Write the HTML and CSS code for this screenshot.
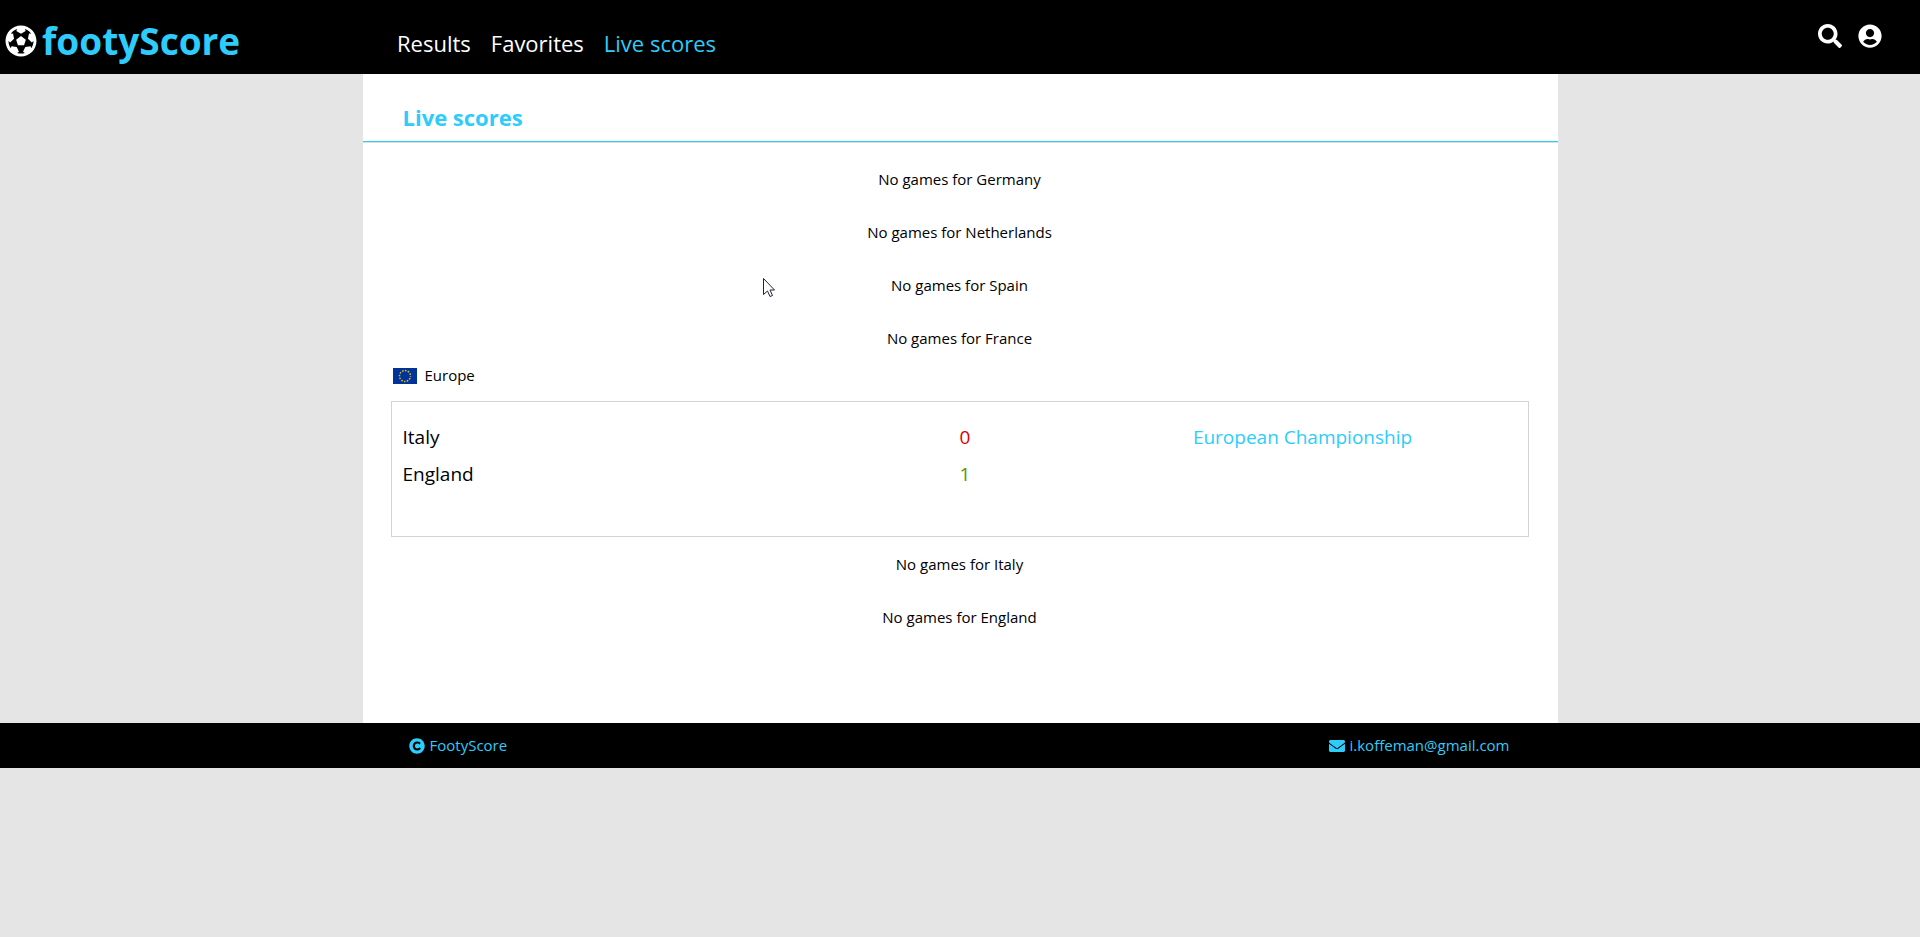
FILE: index.html
```html
<!DOCTYPE html>
<html lang="en">
<head>
<meta charset="utf-8">
<title>footyScore</title>
<link rel="stylesheet" href="styles.css">
</head>
<body>
<header class="header">
  <a class="brand" href="#">
    <svg class="brand-icon" viewBox="0 0 512 512" aria-hidden="true"><path fill-rule="evenodd" d="M504 256c0 136.967-111.033 248-248 248S8 392.967 8 256 119.033 8 256 8s248 111.033 248 248zm-48 0l-.003-.282-26.064 22.741-62.679-58.500 16.454-84.355 34.303 3.072c-24.889-34.216-60.004-60.089-100.709-73.141l13.651 31.939L256 139l-74.953-41.525 13.651-31.939c-40.631 13.028-75.780 38.870-100.709 73.141l34.565-3.073 16.192 84.355-62.678 58.500-26.064-22.741-.003.282c0 43.015 13.497 83.952 38.472 117.991l7.704-33.897 85.138 10.447 36.301 77.826-29.902 17.786c40.202 13.122 84.290 13.148 124.572 0l-29.902-17.786 36.301-77.826 85.138-10.447 7.704 33.897C442.503 339.952 456 299.015 456 256zm-248.102 69.571l-29.894-91.312L256 177.732l77.996 56.527-29.622 91.312h-96.476z"/></svg>
    <span>footyScore</span>
  </a>
  <nav class="nav">
    <a href="#">Results</a>
    <a href="#">Favorites</a>
    <a class="active" href="#">Live scores</a>
  </nav>
  <div class="actions">
    <button type="button" aria-label="Search"><svg viewBox="0 0 512 512"><path d="M505 442.700L405.300 343c-4.500-4.500-10.600-7-17-7H372c27.600-35.300 44-79.700 44-128C416 93.100 322.900 0 208 0S0 93.100 0 208s93.100 208 208 208c48.300 0 92.700-16.400 128-44v16.300c0 6.400 2.500 12.500 7 17l99.700 99.700c9.400 9.400 24.600 9.400 33.900 0l28.300-28.300c9.400-9.400 9.400-24.600.1-34zM208 336c-70.700 0-128-57.200-128-128 0-70.700 57.200-128 128-128 70.700 0 128 57.200 128 128 0 70.700-57.200 128-128 128z"/></svg></button>
    <button type="button" aria-label="Account"><svg viewBox="0 0 496 512"><path d="M248 8C111 8 0 119 0 256s111 248 248 248 248-111 248-248S385 8 248 8zm0 96c48.600 0 88 39.400 88 88s-39.400 88-88 88-88-39.400-88-88 39.400-88 88-88zm0 344c-58.700 0-111.300-26.600-146.500-68.200 18.800-35.400 55.600-59.800 98.500-59.800 2.400 0 4.800.4 7.100 1.100 13 4.200 26.600 6.900 40.900 6.900 14.300 0 28-2.700 40.900-6.900 2.300-.7 4.700-1.100 7.100-1.100 42.900 0 79.700 24.400 98.500 59.800C359.300 421.400 306.700 448 248 448z"/></svg></button>
  </div>
</header>
<main class="main">
  <h1 class="title">Live scores</h1>
  <div class="list">
    <p class="empty">No games for Germany</p>
    <p class="empty">No games for Netherlands</p>
    <p class="empty">No games for Spain</p>
    <p class="empty">No games for France</p>
    <section class="league">
      <h2 class="league-name">
        <svg class="flag" viewBox="0 0 24 16" aria-hidden="true"><rect width="24" height="16" fill="#039"/><circle cx="12" cy="8" r="5.500" fill="none" stroke="#e5c100" stroke-width="1.500" stroke-dasharray="1.500 1.380" stroke-dashoffset="0.750"/></svg>
        <span>Europe</span>
      </h2>
      <div class="match">
        <div class="teams"><span>Italy</span><span>England</span></div>
        <div class="score"><span class="losing">0</span><span class="winning">1</span></div>
        <div class="competition">European Championship</div>
      </div>
    </section>
    <p class="empty">No games for Italy</p>
    <p class="empty">No games for England</p>
  </div>
</main>
<footer class="footer">
  <div class="footer-inner">
    <span class="footer-item"><svg viewBox="0 0 512 512" aria-hidden="true"><path d="M256 8C119.033 8 8 119.033 8 256s111.033 248 248 248 248-111.033 248-248S392.967 8 256 8zm117.134 346.753c-1.592 1.867-39.776 45.731-109.851 45.731-84.692 0-144.484-63.260-144.484-145.567 0-81.303 62.004-143.401 143.762-143.401 66.957 0 101.965 37.315 103.422 38.904a12 12 0 0 1 1.238 14.623l-22.380 34.655c-4.049 6.267-12.774 7.351-18.234 2.295-.233-.214-26.529-23.880-61.880-23.880-46.116 0-73.916 33.575-73.916 76.082 0 39.602 25.514 79.692 74.277 79.692 38.697 0 65.280-28.338 65.544-28.625 5.132-5.565 14.059-5.033 18.508 1.053l24.547 33.572a12.001 12.001 0 0 1-.553 14.866z"/></svg><span>FootyScore</span></span>
    <a class="footer-item" href="mailto:i.koffeman@gmail.com"><svg viewBox="0 0 512 512" aria-hidden="true"><path d="M502.300 190.800c3.900-3.100 9.700-.2 9.700 4.700V400c0 26.500-21.500 48-48 48H48c-26.500 0-48-21.500-48-48V195.600c0-5 5.700-7.800 9.700-4.700 22.400 17.400 52.100 39.500 154.100 113.600 21.100 15.400 56.700 47.800 92.200 47.600 35.700.3 72-32.800 92.300-47.600 102-74.100 131.600-96.300 154-113.700zM256 320c23.200.4 56.600-29.200 73.400-41.400 132.700-96.300 142.800-104.700 173.400-128.700 5.800-4.500 9.200-11.500 9.200-18.900v-19c0-26.500-21.500-48-48-48H48c-26.500 0-48 21.500-48 48v19c0 7.400 3.400 14.300 9.200 18.900 30.600 23.900 40.700 32.400 173.400 128.700 16.800 12.200 50.200 41.800 73.400 41.400z"/></svg><span>i.koffeman@gmail.com</span></a>
  </div>
</footer>
<svg class="cursor" viewBox="0 0 12 19" aria-hidden="true"><path d="M.5.500v16l4-3.500 2.500 5.500 2.500-1-2.500-5.500h4.500z" fill="#fff" stroke="#223"/></svg>
</body>
</html>
```

FILE: styles.css
```css
* { box-sizing: border-box; }

body {
  margin: 0;
  background: #e5e5e5;
  color: #000;
  font-family: "Open Sans", "Noto Sans", sans-serif;
  font-size: 15px;
  line-height: 21px;
}

h1, h2, p { margin: 0; }
a { color: inherit; text-decoration: none; }
svg { display: block; fill: currentColor; }

.header {
  display: grid;
  grid-template-columns: 397px 1fr auto;
  height: 74px;
  background: #000;
  color: #fff;
}

.brand {
  display: flex;
  align-items: center;
  gap: 5px;
  padding: 8px 0 0 5px;
  color: #2eccfa;
  font-size: 37px;
  font-weight: 700;
  line-height: 48px;
}
.brand-icon { width: 32px; height: 32px; color: #fff; }

.nav {
  display: flex;
  align-items: center;
  gap: 20px;
  padding-top: 12px;
  font-size: 22px;
  line-height: 32px;
}
.nav .active { color: #2eccfa; }

.actions {
  display: flex;
  align-items: center;
  gap: 16px;
  padding: 0 38px 2px 0;
}
.actions button {
  padding: 0;
  border: 0;
  background: none;
  color: #fff;
  cursor: pointer;
}
.actions svg { width: 24px; height: 24px; }

.main {
  width: 62.24%;
  margin: 0 auto;
  padding-bottom: 79px;
  background: #fff;
}

.title {
  padding: 28px 40px 8px;
  border-bottom: 1px solid #2eccfa;
  box-shadow: 0 1px 0 #ddd;
  color: #2eccfa;
  font-size: 22px;
  line-height: 31px;
}

.list { padding: 11px 29px 0 28px; }
.empty { padding: 16px 0; text-align: center; }

.league-name {
  display: flex;
  align-items: center;
  gap: 8px;
  padding-left: 2px;
  font-size: 15px;
  font-weight: 400;
}
.flag { width: 24px; height: 16px; }

.match {
  display: grid;
  grid-template-columns: 2fr 1fr 2fr;
  min-height: 136px;
  margin-top: 15px;
  padding: 17px 0 17px 11px;
  border: 1px solid #d3d3d3;
  font-size: 19px;
  line-height: 37px;
}
.league { padding-bottom: 1px; }
.teams, .score { display: flex; flex-direction: column; }
.score, .competition { text-align: center; }
.losing { color: #e00000; }
.winning { color: #4e9a06; }
.competition { color: #2eccfa; }

.footer { background: #000; color: #2eccfa; }
.footer-inner {
  display: flex;
  justify-content: space-between;
  width: 62.24%;
  margin: 0 auto;
  padding: 12px 48px 12px 46px;
}
.footer-item { display: flex; align-items: center; gap: 5px; }
.footer-item svg { width: 16px; height: 16px; }

.cursor {
  position: absolute;
  left: 763px;
  top: 278px;
  width: 12px;
  height: 19px;
}
```
